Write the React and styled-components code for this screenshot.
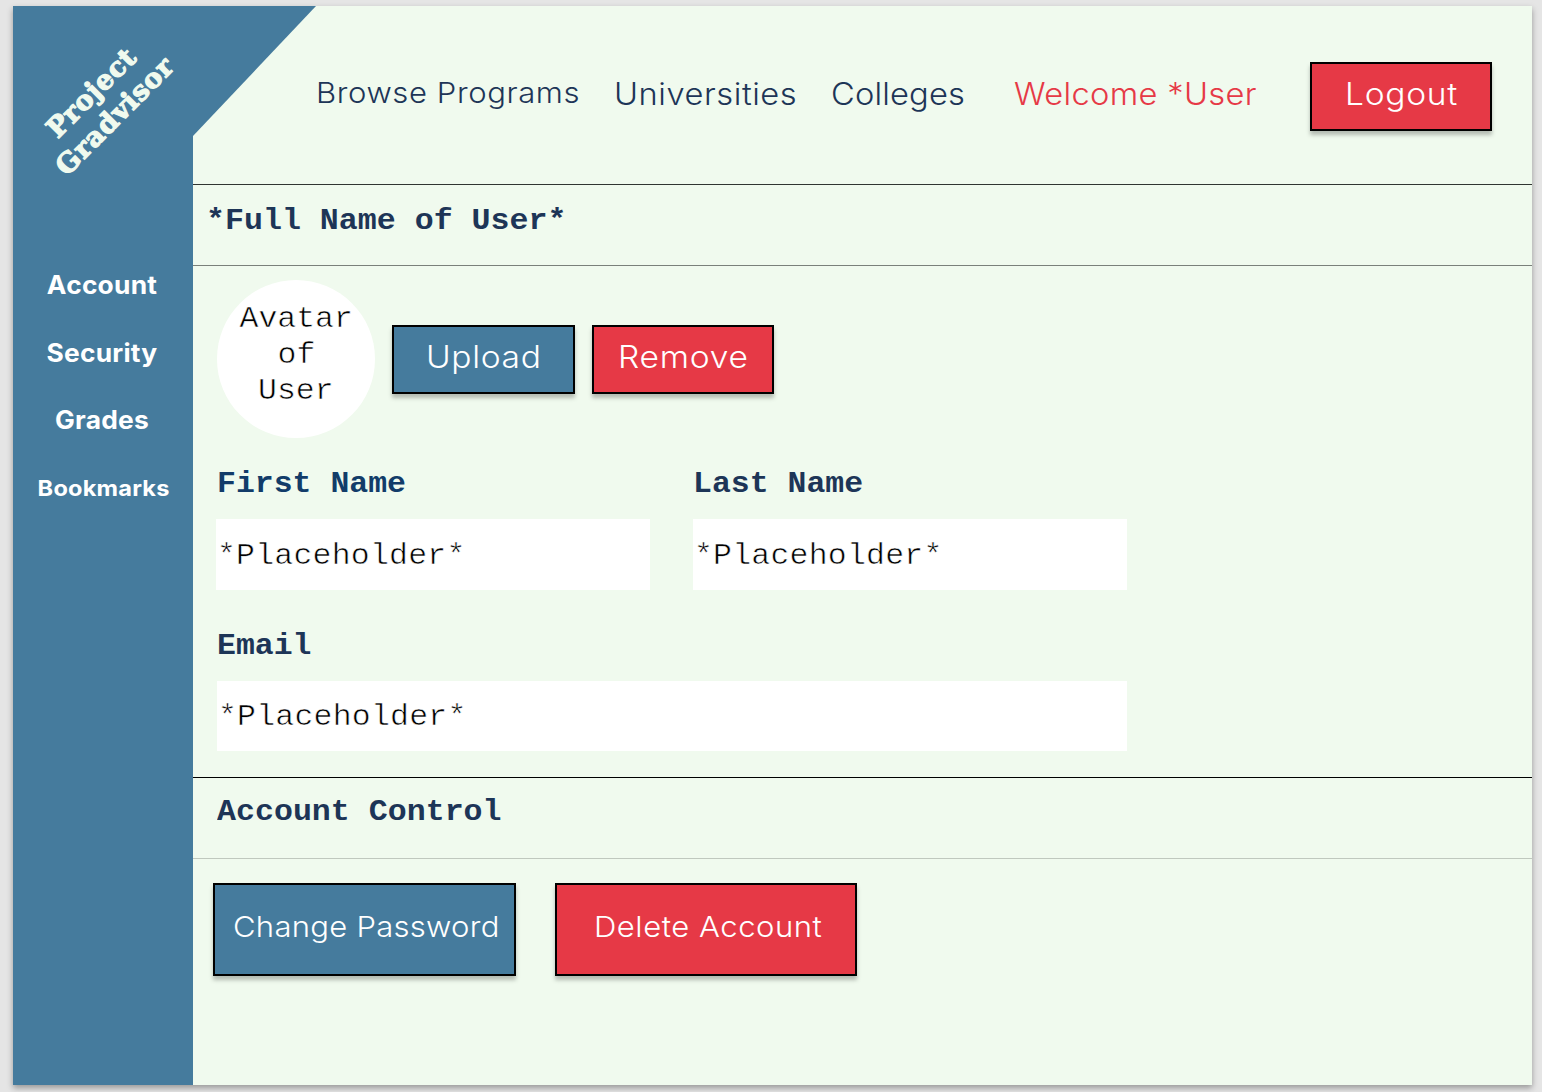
import React from "react";
import styled, { createGlobalStyle, css } from "styled-components";

const color = {
  blue: "#457b9d",
  red: "#e63946",
  mint: "#f0faee",
  navy: "#1d3557",
};

const sans = css`
  font-family: Inter, "Open Sans", sans-serif;
`;

const mono = css`
  font-family: "Liberation Mono", "Courier New", monospace;
`;

/* A white outline over the fill gives the regular mono face its hairline look. */
const hairline = css`
  -webkit-text-stroke: 0.55px #fff;
`;

const GlobalStyle = createGlobalStyle`
  * { box-sizing: border-box; }
  body { margin: 0; background: #e5e5e5; overflow: hidden; }
`;

const Page = styled.div`
  height: 1092px;
  padding: 6px 10px 7px 13px;
`;

const Frame = styled.div`
  display: grid;
  grid-template-columns: 180px 1fr;
  height: 1079px;
  background: ${color.mint};
  box-shadow: 0 3px 6px rgba(0, 0, 0, 0.34);
`;

const Sidebar = styled.aside`
  background: ${color.blue};
`;

const LogoArea = styled.div`
  height: 246px;
  padding-top: 65px;
`;

const Logo = styled.div`
  width: 180px;
  transform: rotate(-45deg);
  font: 700 27px/33px "DejaVu Serif", serif;
  letter-spacing: 0.8px;
  text-align: center;
  color: ${color.mint};
  -webkit-text-stroke: 1.2px ${color.mint};
`;

const SideNav = styled.nav`
  display: flex;
  flex-direction: column;
  padding-right: 2px;
`;

const SideLink = styled.a`
  ${sans}
  font-size: ${(p) => (p.$small ? 22 : 25)}px;
  font-weight: 700;
  line-height: 67.5px;
  letter-spacing: 0.2px;
  text-align: center;
  color: #fff;
  transform: scaleX(${(p) => (p.$small ? 1.07 : 1.055)});
  padding-left: ${(p) => (p.$small ? 3 : 0)}px;
`;

const Header = styled.header`
  display: flex;
  align-items: flex-start;
  height: 179px;
  border-bottom: 1px solid #303531;
`;

const Corner = styled.div`
  flex: none;
  width: 123px;
  height: 130px;
  background: ${color.blue};
  clip-path: polygon(0 0, 100% 0, 0 100%);
`;

const Stretch = styled.span`
  display: inline-block;
  white-space: nowrap;
  transform: scaleX(${(p) => p.$x || 1.07});
  transform-origin: ${(p) => p.$from || "left"} center;
  letter-spacing: ${(p) => p.$track || 0}px;
`;

const NavLink = styled.a`
  ${sans}
  flex: none;
  width: ${(p) => p.$width}px;
  margin-top: ${(p) => (p.$compact ? 67.4 : 67.9)}px;
  font-size: ${(p) => (p.$compact ? 29 : 30.5)}px;
  font-weight: 350;
  line-height: 40px;
  color: ${(p) => (p.$accent ? color.red : color.navy)};
`;

const Button = styled.button`
  ${sans}
  flex: none;
  display: block;
  width: ${(p) => p.$width || 182}px;
  height: ${(p) => (p.$large ? 93 : 69)}px;
  padding: 0 0 5px ${(p) => p.$inset}px;
  border: 2px solid #000;
  background: ${(p) => (p.$danger ? color.red : color.blue)};
  box-shadow: 0 4px 4px rgba(0, 0, 0, 0.25);
  color: #fff;
  font-size: ${(p) => (p.$large ? 29 : 30.5)}px;
  font-weight: 300;
  line-height: ${(p) => (p.$large ? 84 : 60)}px;
  text-align: left;
`;

const LogoutSlot = styled.div`
  padding-top: 56px;
`;

const TitleBar = styled.div`
  height: 81px;
  padding: ${(p) => p.$pad};
  border-bottom: 1px solid ${(p) => p.$rule};
`;

const Title = styled.h1`
  ${mono}
  margin: 0;
  font-size: 29px;
  font-weight: 700;
  line-height: 40px;
  color: ${color.navy};
`;

const Profile = styled.section`
  height: 512px;
  padding: 14px 0 0 23px;
  border-bottom: 1px solid #000;
`;

const AvatarRow = styled.div`
  display: flex;
  align-items: center;
  gap: 17px;
  padding-left: 1px;
`;

const Avatar = styled.div`
  ${mono}
  ${hairline}
  display: flex;
  flex-direction: column;
  align-items: center;
  width: 158px;
  height: 158px;
  padding-top: 22px;
  border-radius: 50%;
  background: #fff;
  color: #000;
  font-size: 29px;
  line-height: 36px;
`;

const FieldRow = styled.div`
  display: flex;
  gap: 43px;
  margin-top: ${(p) => p.$top}px;
`;

const Field = styled.div`
  width: ${(p) => p.$width}px;
  margin-left: ${(p) => p.$indent || 0}px;
`;

const Label = styled.div`
  ${mono}
  padding-left: ${(p) => (p.$bright ? 1 : 0)}px;
  margin-bottom: 16px;
  font-size: 29px;
  font-weight: 700;
  line-height: 36px;
  color: ${(p) => (p.$bright ? "#123c69" : color.navy)};
`;

const Input = styled.div`
  ${mono}
  ${hairline}
  height: ${(p) => p.$height || 71}px;
  padding-left: 1px;
  background: #fff;
  color: #000;
  font-size: 29px;
  line-height: ${(p) => (p.$height ? 73 : 75)}px;
`;

const Actions = styled.div`
  display: flex;
  gap: 39px;
  padding: 24px 0 0 20px;
`;

const M = 1.086;

export default function App() {
  return (
    <Page>
      <GlobalStyle />
      <Frame>
        <Sidebar>
          <LogoArea>
            <Logo>
              Project
              <br />
              Gradvisor
            </Logo>
          </LogoArea>
          <SideNav>
            <SideLink>Account</SideLink>
            <SideLink>Security</SideLink>
            <SideLink>Grades</SideLink>
            <SideLink $small>Bookmarks</SideLink>
          </SideNav>
        </Sidebar>
        <main>
          <Header>
            <Corner />
            <NavLink $width={298} $compact>
              <Stretch $track={0.56}>Browse Programs</Stretch>
            </NavLink>
            <NavLink $width={217}>
              <Stretch $track={0.52}>Universities</Stretch>
            </NavLink>
            <NavLink $width={183}>
              <Stretch $track={0.15}>Colleges</Stretch>
            </NavLink>
            <NavLink $width={296} $accent>
              <Stretch $track={0.32}>Welcome *User</Stretch>
            </NavLink>
            <LogoutSlot>
              <Button $danger $inset={33}>
                <Stretch $x={1.1} $track={0.66}>Logout</Stretch>
              </Button>
            </LogoutSlot>
          </Header>
          <TitleBar $pad="17px 0 0 13px" $rule="#7a807a">
            <Title>
              <Stretch $x={1.09}>*Full Name of User*</Stretch>
            </Title>
          </TitleBar>
          <Profile>
            <AvatarRow>
              <Avatar>
                <Stretch $x={M} $from="center">Avatar</Stretch>
                <Stretch $x={M} $from="center">of</Stretch>
                <Stretch $x={M} $from="center">User</Stretch>
              </Avatar>
              <Button $width={183} $inset={32}>
                <Stretch $x={1.1} $track={0.6}>Upload</Stretch>
              </Button>
              <Button $danger $inset={24}>
                <Stretch $x={1.1} $track={0.68}>Remove</Stretch>
              </Button>
            </AvatarRow>
            <FieldRow $top={29}>
              <Field $width={434}>
                <Label $bright>
                  <Stretch $x={M}>First Name</Stretch>
                </Label>
                <Input>
                  <Stretch $x={M} $track={0.2}>*Placeholder*</Stretch>
                </Input>
              </Field>
              <Field $width={434}>
                <Label>
                  <Stretch $x={M}>Last Name</Stretch>
                </Label>
                <Input>
                  <Stretch $x={M} $track={0.2}>*Placeholder*</Stretch>
                </Input>
              </Field>
            </FieldRow>
            <FieldRow $top={39}>
              <Field $width={910} $indent={1}>
                <Label>
                  <Stretch $x={M}>Email</Stretch>
                </Label>
                <Input $height={70}>
                  <Stretch $x={M} $track={0.2}>*Placeholder*</Stretch>
                </Input>
              </Field>
            </FieldRow>
          </Profile>
          <TitleBar $pad="15px 0 0 24px" $rule="#c0c8be">
            <Title as="h2">
              <Stretch $x={1.09}>Account Control</Stretch>
            </Title>
          </TitleBar>
          <Actions>
            <Button $large $width={303} $inset={18}>
              <Stretch $track={0.25}>Change Password</Stretch>
            </Button>
            <Button $large $danger $width={302} $inset={37}>
              <Stretch $track={0.5}>Delete Account</Stretch>
            </Button>
          </Actions>
        </main>
      </Frame>
    </Page>
  );
}
